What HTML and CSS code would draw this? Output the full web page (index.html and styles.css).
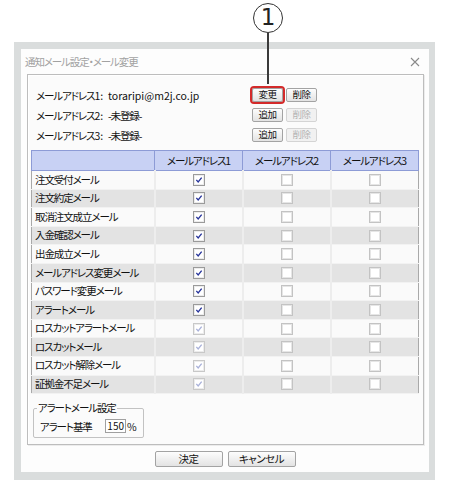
FILE: index.html
```html
<!DOCTYPE html>
<html lang="ja">
<head>
<meta charset="utf-8">
<title>通知メール設定・メール変更</title>
<link rel="stylesheet" href="styles.css">
</head>
<body>
<div class="stage">
  <div class="callout">
    <div class="callout-circle">1</div>
    <div class="callout-stem"></div>
  </div>
  <div class="frame">
    <div class="window">
      <div class="titlebar">
        <span class="title">通知メール設定・メール変更</span>
        <svg class="close" width="10" height="10" viewBox="0 0 10 10"><path d="M1 1L9 9M9 1L1 9" stroke="#8a8a8a" stroke-width="1.1" fill="none"/></svg>
      </div>
      <div class="panel">
        <div class="addr-list">
          <div class="addr-row">
            <span class="addr-label">メールアドレス<span class="latin">1:</span></span>
            <span class="addr-value latin">toraripi@m2j.co.jp</span>
            <button class="btn small highlight">変更</button>
            <button class="btn small">削除</button>
          </div>
          <div class="addr-row">
            <span class="addr-label">メールアドレス<span class="latin">2:</span></span>
            <span class="addr-value">-未登録-</span>
            <button class="btn small">追加</button>
            <button class="btn small disabled">削除</button>
          </div>
          <div class="addr-row">
            <span class="addr-label">メールアドレス<span class="latin">3:</span></span>
            <span class="addr-value">-未登録-</span>
            <button class="btn small">追加</button>
            <button class="btn small disabled">削除</button>
          </div>
        </div>
        <table class="grid">
          <thead>
            <tr><th class="c0"></th><th>メールアドレス1</th><th>メールアドレス2</th><th>メールアドレス3</th></tr>
          </thead>
          <tbody>
            <tr><td class="name">注文受付メール</td><td><span class="cb on"><svg viewBox="0 0 12 12"><path d="M2.8 5.8L5 8.3L9.2 3.2"/></svg></span></td><td><span class="cb"></span></td><td><span class="cb"></span></td></tr>
            <tr><td class="name">注文約定メール</td><td><span class="cb on"><svg viewBox="0 0 12 12"><path d="M2.8 5.8L5 8.3L9.2 3.2"/></svg></span></td><td><span class="cb"></span></td><td><span class="cb"></span></td></tr>
            <tr><td class="name">取消注文成立メール</td><td><span class="cb on"><svg viewBox="0 0 12 12"><path d="M2.8 5.8L5 8.3L9.2 3.2"/></svg></span></td><td><span class="cb"></span></td><td><span class="cb"></span></td></tr>
            <tr><td class="name">入金確認メール</td><td><span class="cb on"><svg viewBox="0 0 12 12"><path d="M2.8 5.8L5 8.3L9.2 3.2"/></svg></span></td><td><span class="cb"></span></td><td><span class="cb"></span></td></tr>
            <tr><td class="name">出金成立メール</td><td><span class="cb on"><svg viewBox="0 0 12 12"><path d="M2.8 5.8L5 8.3L9.2 3.2"/></svg></span></td><td><span class="cb"></span></td><td><span class="cb"></span></td></tr>
            <tr><td class="name">メールアドレス変更メール</td><td><span class="cb on"><svg viewBox="0 0 12 12"><path d="M2.8 5.8L5 8.3L9.2 3.2"/></svg></span></td><td><span class="cb"></span></td><td><span class="cb"></span></td></tr>
            <tr><td class="name">パスワード変更メール</td><td><span class="cb on"><svg viewBox="0 0 12 12"><path d="M2.8 5.8L5 8.3L9.2 3.2"/></svg></span></td><td><span class="cb"></span></td><td><span class="cb"></span></td></tr>
            <tr><td class="name">アラートメール</td><td><span class="cb on"><svg viewBox="0 0 12 12"><path d="M2.8 5.8L5 8.3L9.2 3.2"/></svg></span></td><td><span class="cb"></span></td><td><span class="cb"></span></td></tr>
            <tr><td class="name">ロスカットアラートメール</td><td><span class="cb on dis"><svg viewBox="0 0 12 12"><path d="M2.8 5.8L5 8.3L9.2 3.2"/></svg></span></td><td><span class="cb"></span></td><td><span class="cb"></span></td></tr>
            <tr><td class="name">ロスカットメール</td><td><span class="cb on dis"><svg viewBox="0 0 12 12"><path d="M2.8 5.8L5 8.3L9.2 3.2"/></svg></span></td><td><span class="cb"></span></td><td><span class="cb"></span></td></tr>
            <tr><td class="name">ロスカット解除メール</td><td><span class="cb on dis"><svg viewBox="0 0 12 12"><path d="M2.8 5.8L5 8.3L9.2 3.2"/></svg></span></td><td><span class="cb"></span></td><td><span class="cb"></span></td></tr>
            <tr><td class="name">証拠金不足メール</td><td><span class="cb on dis"><svg viewBox="0 0 12 12"><path d="M2.8 5.8L5 8.3L9.2 3.2"/></svg></span></td><td><span class="cb"></span></td><td><span class="cb"></span></td></tr>
          </tbody>
        </table>
        <fieldset class="alert">
          <legend>アラートメール設定</legend>
          <div class="alert-row">
            <span class="alert-label">アラート基準</span>
            <span class="alert-input latin">150</span>
            <span class="alert-unit latin">%</span>
          </div>
        </fieldset>
      </div>
      <div class="actions">
        <button class="btn wide">決定</button>
        <button class="btn wide">キャンセル</button>
      </div>
    </div>
  </div>
</div>
</body>
</html>
```
FILE: styles.css
```css
* { box-sizing: border-box; }
html, body {
  margin: 0;
  padding: 0;
  background: #ffffff;
}
body {
  font-family: "Noto Sans CJK JP", "Noto Sans", sans-serif;
  font-size: 10.5px;
  color: #111111;
  font-feature-settings: "palt";
  letter-spacing: -1.1px;
}
.latin { letter-spacing: 0; }
.stage {
  position: relative;
  width: 450px;
  height: 480px;
  overflow: hidden;
}
.callout {
  position: absolute;
  left: 253px;
  top: 3px;
  width: 31px;
}
.callout-circle {
  width: 30px;
  height: 30px;
  border: 1.5px solid #333;
  border-radius: 50%;
  display: flex;
  align-items: center;
  justify-content: center;
  font-family: "DejaVu Sans", "Liberation Sans", sans-serif;
  font-size: 23px;
  letter-spacing: 0;
  line-height: 1;
  color: #222;
  padding-bottom: 1px;
}
.callout-stem {
  width: 2px;
  height: 51px;
  margin-left: 14px;
  background: #3a3a3a;
}
.frame {
  margin: 42px 0 0 14px;
  width: 421px;
  height: 438px;
  padding: 7px 6px 0 7px;
  background: #dadddd;
}
.window {
  width: 408px;
  height: 423px;
  background: #fdfdfd;
  display: flex;
  flex-direction: column;
}
.titlebar {
  height: 25px;
  display: flex;
  align-items: center;
  justify-content: space-between;
  padding: 0 9px 0 4px;
}
.title {
  color: #a2a2a2;
  font-size: 10.5px;
}
.close { display: block; }
.panel {
  margin: 0 5px 0 6px;
  height: 371px;
  border: 1px solid #bdbdbd;
  box-shadow: inset 1px 1px 0 #ffffff, 1px 1px 0 #ececec;
  background: #fbfbfb;
}
.addr-list {
  padding: 10px 0 0 8px;
}
.addr-row {
  height: 20px;
  display: flex;
  align-items: center;
}
.addr-label { width: 72px; flex: none; }
.addr-value { width: 144px; flex: none; }
.btn {
  font-family: inherit;
  font-feature-settings: "palt";
  letter-spacing: -0.5px;
  color: #111111;
  padding: 0;
  border: 1px solid #a3a3a3;
  border-radius: 2px;
  background: linear-gradient(#fdfdfd, #e3e3e3);
  line-height: 1;
}
.btn.small {
  width: 31px;
  height: 14px;
  font-size: 9.5px;
  margin-right: 3px;
}
.btn.highlight {
  outline: 2px solid #d32a2a;
  outline-offset: 0;
}
.btn.disabled {
  color: #b4b4b4;
  border-color: #d4d4d4;
  background: #f1f1f1;
}
.btn.wide {
  width: 68px;
  height: 16px;
  font-size: 10.5px;
}
.grid {
  margin: 5px 0 0 3px;
  width: 388px;
  border-collapse: collapse;
  border: 1px solid #a9a9a9;
  table-layout: fixed;
}
.grid th {
  height: 20px;
  background: #c8d1f4;
  border: 1px solid #8d9bd6;
  font-weight: normal;
  font-size: 10.5px;
  padding: 0;
  text-align: center;
}
.grid th.c0 { width: 123px; }
.grid th:nth-child(2), .grid th:nth-child(3) { width: 88px; }
.grid td {
  height: 18.6px;
  padding: 0;
  text-align: center;
  border-left: 2px solid #ededed;
  border-bottom: 1px solid #f2f2f2;
  line-height: 1;
}
.grid td.name {
  text-align: left;
  padding-left: 3px;
  border-left: none;
}
.grid tbody tr:nth-child(odd) td { background: #fafafa; }
.grid tbody tr:nth-child(even) td { background: #e3e3e3; }
.cb {
  display: inline-block;
  width: 12px;
  height: 12px;
  vertical-align: middle;
  border: 1px solid #c3c3c3;
  box-shadow: inset 0 0 0 1px #e6e6e6;
  background: #ffffff;
}
.cb svg {
  display: block;
  width: 10px;
  height: 10px;
  fill: none;
  stroke: #26339a;
  stroke-width: 1.6;
}
.cb.on {
  border-color: #9a9a9a;
  box-shadow: inset 0 0 0 1px #ececec;
}
.cb.on.dis {
  border-color: #c8c8c8;
}
.cb.on.dis svg { stroke: #a9b1d9; }
.alert {
  margin: 8px 0 0 5px;
  width: 111px;
  padding: 5px 4px 4px 6px;
  border: 1px solid #c2c2c2;
  border-radius: 2px;
}
.alert legend {
  margin-left: -3px;
  padding: 0 1px;
  line-height: 12px;
  font-size: 10.5px;
}
.alert-row {
  display: flex;
  align-items: center;
  height: 14px;
}
.alert-label { width: 65px; flex: none; }
.alert-input {
  width: 21px;
  height: 14px;
  flex: none;
  border: 1px solid #a0a0a0;
  background: #ffffff;
  text-align: right;
  padding-right: 1px;
  line-height: 12px;
  font-size: 10px;
}
.alert-unit { margin-left: 1px; }
.actions {
  margin-top: 6px;
  display: flex;
  justify-content: center;
  gap: 5px;
}
```
